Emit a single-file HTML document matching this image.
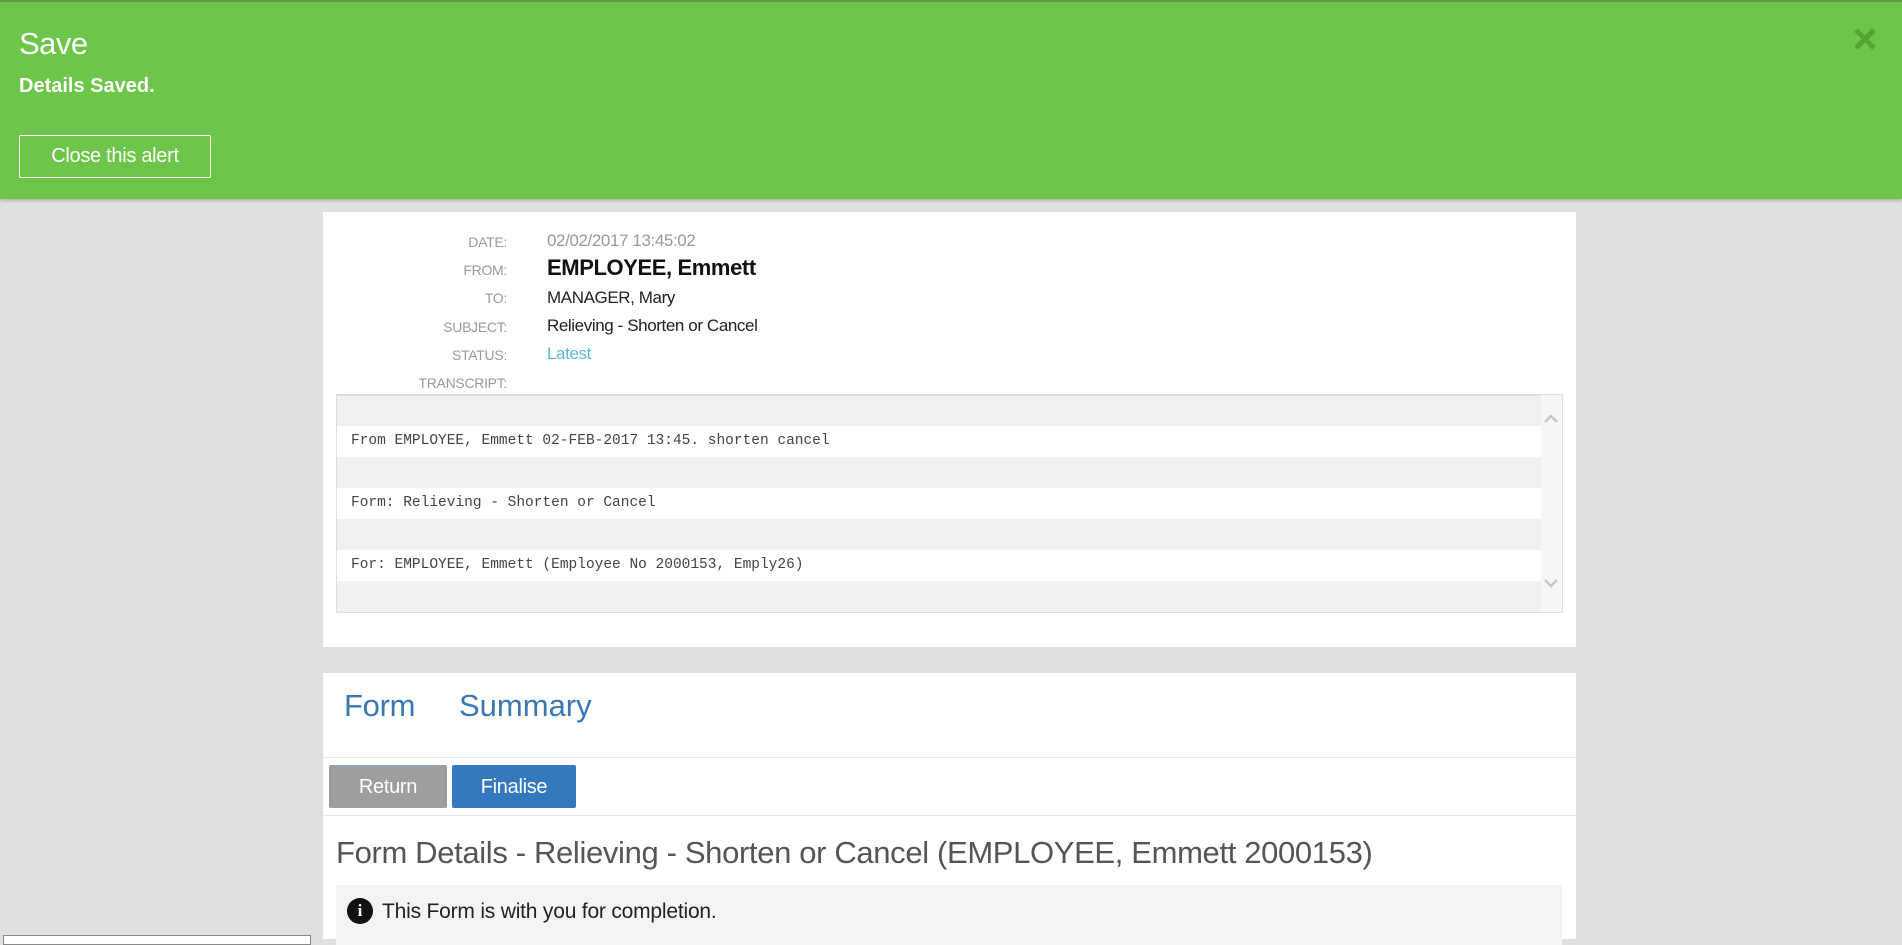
<!DOCTYPE html>
<html><head><meta charset="utf-8"><style>
*{box-sizing:border-box;margin:0;padding:0}
body{width:1902px;height:939px;overflow:hidden;background:#dfe0e2;font-family:"Liberation Sans",sans-serif;position:relative}
.abs{position:absolute}
#alert{left:0;top:0;width:1902px;height:199px;background:#6dc649;border-top:2px solid #5e9c46;box-shadow:0 2px 3px rgba(0,0,0,.2)}
.lbl{position:absolute;right:0;width:200px;text-align:right;font-size:14px;color:#999;letter-spacing:-0.3px}
.val{position:absolute;left:547px;font-size:17px;color:#222;letter-spacing:-0.4px}
.row{position:absolute;left:0;width:1204px;height:31px}
.mono{font-family:"Liberation Mono",monospace;font-size:14.5px;color:#444;position:absolute;left:14px;top:7px;letter-spacing:0}
</style></head><body>
<div id="alert" class="abs">
  <div class="abs" style="left:19px;top:24px;font-size:31px;color:#fff;font-weight:300;letter-spacing:-0.5px">Save</div>
  <div class="abs" style="left:19px;top:73px;font-size:20px;color:#fff;font-weight:bold;letter-spacing:0">Details Saved.</div>
  <div class="abs" style="left:19px;top:133px;width:192px;height:43px;border:1px solid #fff;border-radius:2px;color:#fff;font-size:20px;text-align:center;line-height:41px;letter-spacing:-0.3px">Close this alert</div>
  <svg class="abs" style="left:1853px;top:26px" width="24" height="22" viewBox="0 0 24 22"><path d="M3 2L21 20M21 2L3 20" stroke="#56a334" stroke-width="5"/></svg>
</div>

<div class="abs" style="left:323px;top:212px;width:1253px;height:435px;background:#fff">
  <div class="lbl" style="left:0;width:184px;top:22px">DATE:</div>
  <div class="lbl" style="left:0;width:184px;top:50px">FROM:</div>
  <div class="lbl" style="left:0;width:184px;top:78px">TO:</div>
  <div class="lbl" style="left:0;width:184px;top:107px">SUBJECT:</div>
  <div class="lbl" style="left:0;width:184px;top:135px">STATUS:</div>
  <div class="lbl" style="left:0;width:184px;top:163px">TRANSCRIPT:</div>
  <div class="val" style="left:224px;top:19px;color:#999">02/02/2017 13:45:02</div>
  <div class="val" style="left:224px;top:43px;font-size:22px;font-weight:bold;color:#111">EMPLOYEE, Emmett</div>
  <div class="val" style="left:224px;top:76px">MANAGER, Mary</div>
  <div class="val" style="left:224px;top:104px">Relieving - Shorten or Cancel</div>
  <div class="val" style="left:224px;top:132px;color:#5bb8d4">Latest</div>
  <div class="abs" style="left:13px;top:182px;width:1227px;height:219px;border:1px solid #ddd;background:#f7f7f7;overflow:hidden">
    <div class="row" style="top:0;background:#f1f1f1;border-top:1px solid #ddd"></div>
    <div class="row" style="top:31px;background:#fff"><span class="mono">From EMPLOYEE, Emmett 02-FEB-2017 13:45. shorten cancel</span></div>
    <div class="row" style="top:62px;background:#f1f1f1"></div>
    <div class="row" style="top:93px;background:#fff"><span class="mono">Form: Relieving - Shorten or Cancel</span></div>
    <div class="row" style="top:124px;background:#f1f1f1"></div>
    <div class="row" style="top:155px;background:#fff"><span class="mono">For: EMPLOYEE, Emmett (Employee No 2000153, Emply26)</span></div>
    <div class="row" style="top:186px;background:#f1f1f1;height:33px;border-bottom:1px solid #ccc"></div>
    <svg class="abs" style="left:1206px;top:18px" width="16" height="12" viewBox="0 0 16 12"><path d="M2 9L8 3L14 9" stroke="#c8c8c8" stroke-width="2.5" fill="none"/></svg>
    <svg class="abs" style="left:1206px;top:182px" width="16" height="12" viewBox="0 0 16 12"><path d="M2 3L8 9L14 3" stroke="#c8c8c8" stroke-width="2.5" fill="none"/></svg>
  </div>
</div>

<div class="abs" style="left:323px;top:673px;width:1253px;height:266px;background:#fff">
  <div class="abs" style="left:21px;top:15px;font-size:31px;color:#3a77b5;font-weight:300;letter-spacing:-0.3px">Form</div>
  <div class="abs" style="left:136px;top:15px;font-size:31px;color:#3a77b5;font-weight:300;letter-spacing:0">Summary</div>
  <div class="abs" style="left:0;top:84px;width:1253px;height:1px;background:#e5eaea"></div>
  <div class="abs" style="left:6px;top:92px;width:118px;height:43px;background:#9a9fa3;border-radius:2px;color:#fff;font-size:20px;text-align:center;line-height:45px;letter-spacing:-0.3px">Return</div>
  <div class="abs" style="left:129px;top:92px;width:124px;height:43px;background:#3479bd;border-radius:2px;color:#fff;font-size:20px;text-align:center;line-height:45px;letter-spacing:-0.3px">Finalise</div>
  <div class="abs" style="left:0;top:142px;width:1253px;height:1px;background:#e5eaea"></div>
  <div class="abs" style="left:13px;top:162px;font-size:31px;color:#555;font-weight:300;letter-spacing:-0.35px">Form Details - Relieving - Shorten or Cancel (EMPLOYEE, Emmett 2000153)</div>
  <div class="abs" style="left:13px;top:212px;width:1226px;height:60px;background:#f4f4f4">
    <div class="abs" style="left:11px;top:13px;width:26px;height:26px;border-radius:50%;background:#111;color:#fff;font-weight:bold;font-size:17px;text-align:center;line-height:26px;font-family:'Liberation Serif',serif">i</div>
    <div class="abs" style="left:46px;top:15px;font-size:21px;color:#222;letter-spacing:-0.2px">This Form is with you for completion.</div>
  </div>
</div>
<div class="abs" style="left:3px;top:935px;width:308px;height:10px;border:1px solid #888;background:#fff"></div>
</body></html>
